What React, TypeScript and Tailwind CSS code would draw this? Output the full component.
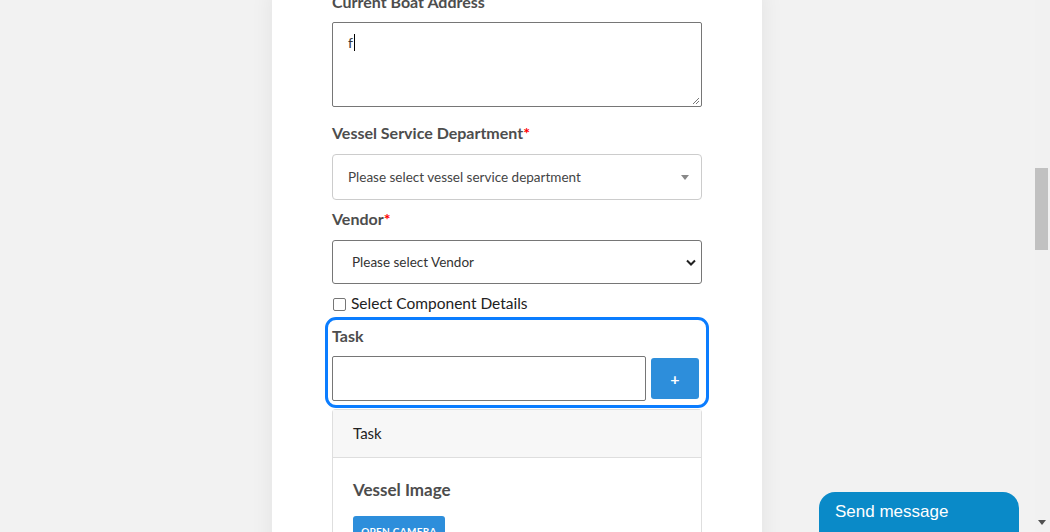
import React from 'react'

const font = { fontFamily: 'Lato, "Noto Sans", sans-serif' }

function Label({ text, required }: { text: string; required?: boolean }) {
  return (
    <div className="text-[16px] leading-[24px] font-bold text-[#4d4d4d]">
      {text}
      {required && <span className="text-[#ff0000]">*</span>}
    </div>
  )
}

export default function App() {
  return (
    <div className="flex h-[532px] w-[1050px] overflow-hidden bg-[#f2f2f2]" style={font}>
      <div className="relative h-full flex-1 overflow-hidden">
        <div className="-mt-[10px] ml-[272px] min-h-[560px] w-[490px] bg-white px-[60px] shadow-[0_0_22px_rgba(0,0,0,0.07)]">
          <Label text="Current Boat Address" />
          <div className="relative mt-[8px] h-[85px] rounded-[2px] border border-[#767676] px-[15px] pt-[8px] text-[14px] text-[#333]">
            <span>f</span>
            <span className="ml-[1px] inline-block h-[17px] w-px translate-y-[3px] bg-black" />
            <svg className="absolute right-[1px] bottom-[1px]" width="9" height="9" viewBox="0 0 9 9">
              <path d="M8 2 L2 8 M8 5 L5 8" stroke="#777" strokeWidth="1" />
            </svg>
          </div>

          <div className="mt-[14px]">
            <Label text="Vessel Service Department" required />
          </div>
          <div className="mt-[9px] flex h-[46px] items-center justify-between rounded-[4px] border border-[#cccccc] pr-[12px] pl-[15px] text-[13.5px] text-[#444]">
            <span>Please select vessel service department</span>
            <svg width="8" height="5" viewBox="0 0 8 5">
              <path d="M0 0 H8 L4 5 Z" fill="#888" />
            </svg>
          </div>

          <div className="mt-[7px]">
            <Label text="Vendor" required />
          </div>
          <div className="mt-[9px] flex h-[44px] items-center justify-between rounded-[3px] border border-[#767676] pr-[5px] pl-[19px] text-[13.5px] text-[#333]">
            <span>Please select Vendor</span>
            <svg width="10" height="7" viewBox="0 0 10 7">
              <path d="M1 1.5 L5 5.5 L9 1.5" fill="none" stroke="#222" strokeWidth="2" />
            </svg>
          </div>

          <div className="mt-[8px] flex h-[24px] items-center gap-[5px] text-[15.5px] text-[#222]">
            <span className="ml-[1px] inline-block h-[13px] w-[13px] rounded-[2px] border border-[#767676] bg-white" />
            <span>Select Component Details</span>
          </div>

          <div className="mt-[8px] rounded-[4px] outline-[3px] outline-offset-[4px] outline-[#0b7dff] outline-solid">
            <div className="text-[16px] leading-[24px] font-bold text-[#4d4d4d]">Task</div>
            <div className="mt-[8px] flex items-center gap-[5px]">
              <div className="h-[45px] w-[314px] rounded-[2px] border border-[#767676]" />
              <button className="flex h-[41px] w-[48px] items-center justify-center rounded-[3px] bg-[#2d8edb] text-[16px] font-bold text-white">
                +
              </button>
            </div>
          </div>

          <div className="mt-[8px] rounded-t-[4px] border border-b-0 border-[#dedede]">
            <div className="flex h-[48px] items-center border-b border-[#dedede] bg-[#f7f7f7] px-[20px] text-[15px] text-[#222]">
              Task
            </div>
            <div className="px-[20px] pt-[18px] pb-[20px]">
              <div className="text-[17px] leading-[27px] font-bold text-[#4d4d4d]">Vessel Image</div>
              <button className="mt-[13px] flex h-[30px] w-[92px] items-center justify-center rounded-[3px] bg-[#2d8edb] text-[10px] font-bold tracking-[0.3px] text-white">
                OPEN CAMERA
              </button>
            </div>
          </div>
        </div>

        <div
          className="absolute right-[16px] bottom-0 h-[40px] w-[200px] rounded-t-[16px] bg-[#0a8ac8] pt-[7px] pl-[16px] text-[17px] text-white"
          style={{ fontFamily: '"Liberation Sans", Arial, sans-serif' }}
        >
          Send message
        </div>
      </div>

      <div className="flex h-full w-[15px] flex-col bg-[#f1f1f1]">
        <div className="mt-[168px] h-[82px] w-[13px] bg-[#c1c1c1]" />
        <div className="flex-1" />
        <div className="mb-[7px] flex justify-center pr-[1px]">
          <svg width="8" height="5" viewBox="0 0 8 5">
            <path d="M0 0 H8 L4 5 Z" fill="#505050" />
          </svg>
        </div>
      </div>
    </div>
  )
}
